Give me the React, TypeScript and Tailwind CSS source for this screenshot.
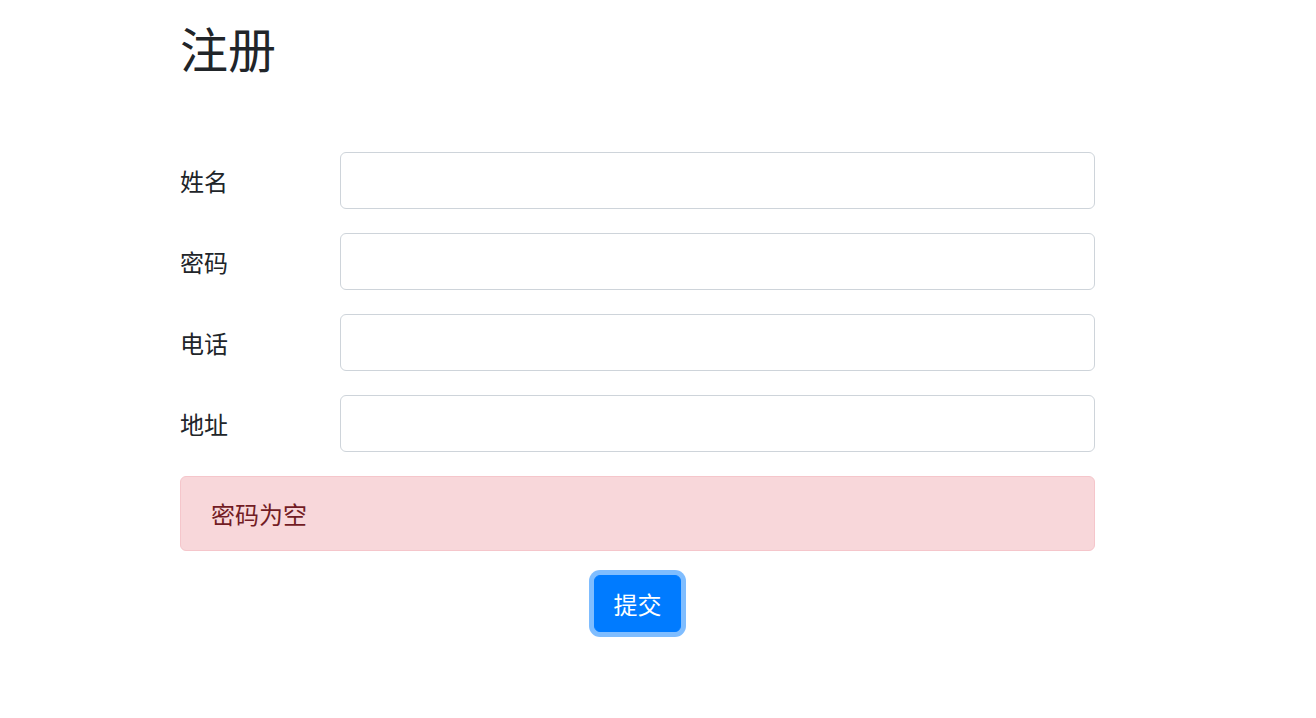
export default function App() {
  const fields = ["姓名", "密码", "电话", "地址"];
  return (
    <div
      className="min-h-[718px] w-full bg-white text-[#212529]"
      style={{ fontFamily: '"Noto Sans CJK SC", "Noto Sans", sans-serif' }}
    >
      <div className="ml-[180px] w-[915px] pt-[18px]">
        <h2 className="text-[48px] leading-[58px] font-normal">注册</h2>
        <form className="mt-[76px] flex flex-col">
          {fields.map((f) => (
            <div key={f} className="mb-[24px] flex items-center">
              <label className="w-[160px] text-[24px] leading-[36px]">{f}</label>
              <input
                type={f === "密码" ? "password" : "text"}
                className="h-[57px] flex-1 rounded-[6px] border-[1.5px] border-[#ced4da] bg-white px-[18px] text-[24px] outline-none"
              />
            </div>
          ))}
          <div className="rounded-[6px] border border-[#f5c6cb] bg-[#f8d7da] px-[30px] py-[18px] text-[24px] leading-[37px] text-[#721c24]">
            密码为空
          </div>
          <div className="mt-[24px] flex justify-center">
            <button
              type="button"
              className="h-[57px] w-[87px] rounded-[6px] border-[1.5px] border-[#007bff] bg-[#007bff] text-[24px] leading-[36px] text-white shadow-[0_0_0_5px_rgba(0,123,255,0.5)]"
            >
              提交
            </button>
          </div>
        </form>
      </div>
    </div>
  );
}
